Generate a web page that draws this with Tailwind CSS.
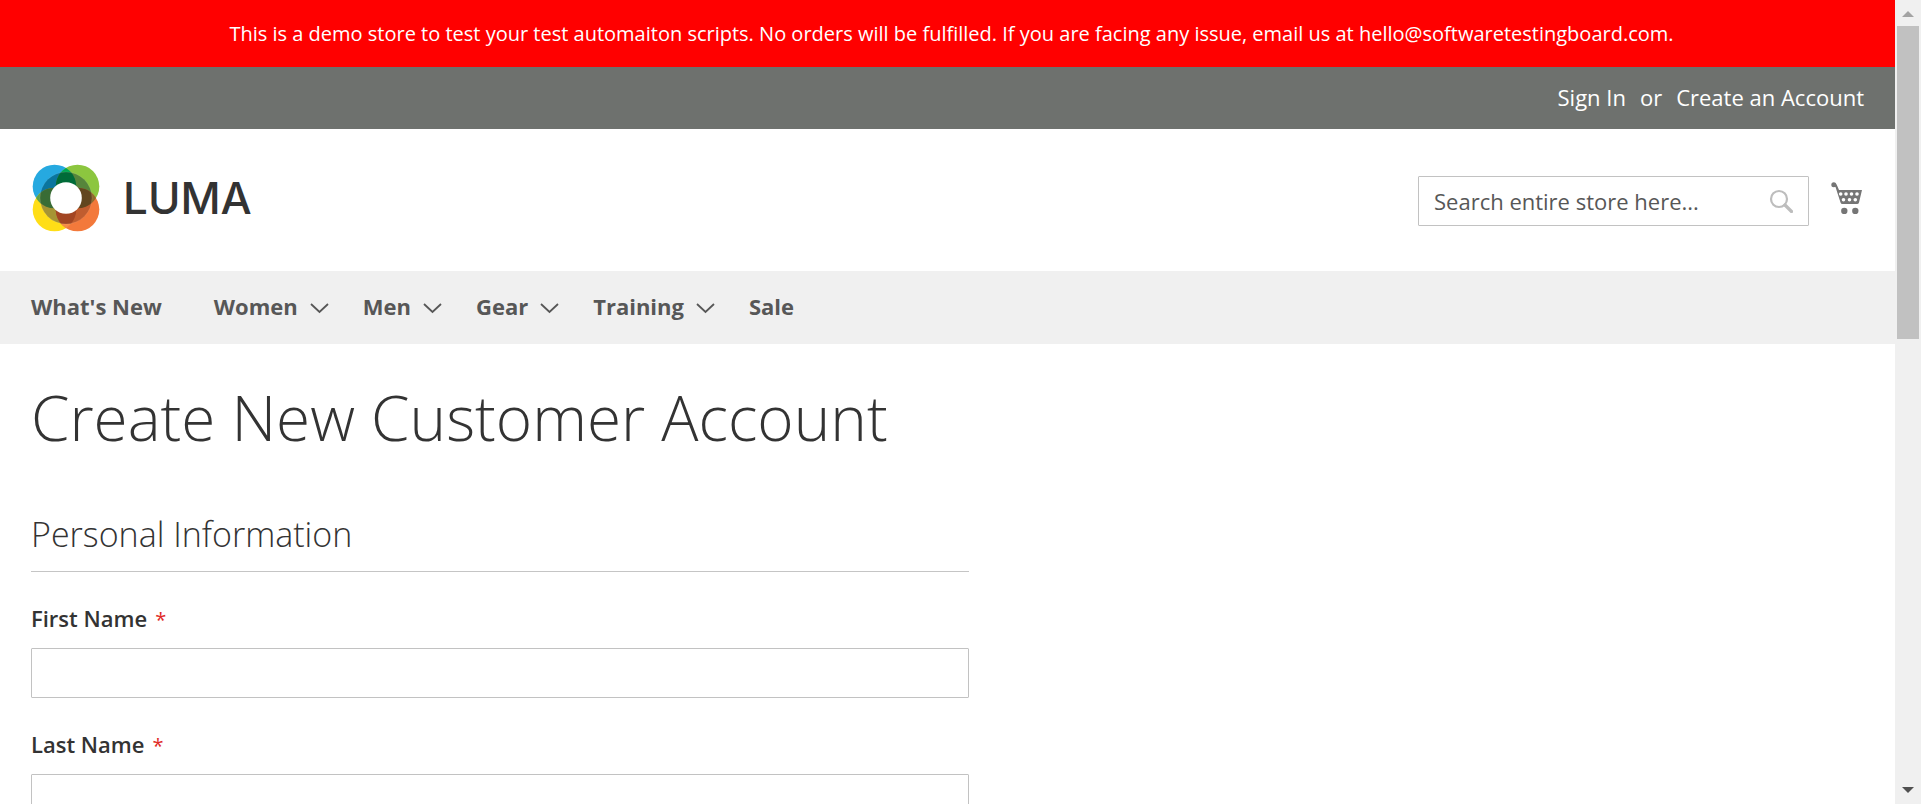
<!DOCTYPE html>
<html lang="en">
<head>
<meta charset="utf-8">
<meta name="viewport" content="width=device-width, initial-scale=1">
<title>Create New Customer Account</title>
<script src="https://cdn.jsdelivr.net/npm/@tailwindcss/browser@4"></script>
</head>
<body class="flex h-screen overflow-hidden bg-white font-['Open_Sans','Noto_Sans',sans-serif] text-[22px] leading-[30px] text-[#333]">
<div class="min-w-0 flex-1 overflow-hidden">
  <p class="bg-[#ff0000] py-[19px] pr-6 pl-8 text-center text-[20px] leading-[29px] text-white">This is a demo store to test your test automaiton scripts. No orders will be fulfilled. If you are facing any issue, email us at hello@softwaretestingboard.com.</p>
  <header>
    <div class="flex items-center justify-end bg-[#6e716e] px-[31px] pt-[15px] pb-[17px] text-white">
      <a href="#">Sign In</a>
      <span class="mx-[14px]">or</span>
      <a href="#">Create an Account</a>
    </div>
    <div class="flex h-[142px] items-center justify-between px-[31px]">
      <a href="#" aria-label="Luma home" class="flex items-center gap-[22px] pb-1">
        <svg class="size-[70px]" viewBox="0 0 70 70">
          <defs>
            <clipPath id="tl"><circle cx="23.500" cy="23.500" r="21.800"/></clipPath>
            <clipPath id="tr"><circle cx="46.500" cy="23.500" r="21.800"/></clipPath>
            <clipPath id="bl"><circle cx="23.500" cy="46.500" r="21.800"/></clipPath>
            <clipPath id="br"><circle cx="46.500" cy="46.500" r="21.800"/></clipPath>
            <clipPath id="hub"><circle cx="35" cy="35" r="26"/></clipPath>
          </defs>
          <circle cx="23.500" cy="23.500" r="21.800" fill="#26a9e0"/>
          <circle cx="46.500" cy="23.500" r="21.800" fill="#8cc63f"/>
          <circle cx="23.500" cy="46.500" r="21.800" fill="#ffde17"/>
          <circle cx="46.500" cy="46.500" r="21.800" fill="#f3793b"/>
          <g clip-path="url(#tl)"><circle cx="46.500" cy="23.500" r="21.800" fill="#00a651"/><circle cx="23.500" cy="46.500" r="21.800" fill="#5f9f45"/></g>
          <g clip-path="url(#br)"><circle cx="46.500" cy="23.500" r="21.800" fill="#8f6a2c"/><circle cx="23.500" cy="46.500" r="21.800" fill="#f58b45"/></g>
          <g clip-path="url(#hub)">
            <circle cx="23.500" cy="23.500" r="21.800" fill="#0a759e"/>
            <circle cx="46.500" cy="23.500" r="21.800" fill="#56853b"/>
            <circle cx="23.500" cy="46.500" r="21.800" fill="#a69434"/>
            <circle cx="46.500" cy="46.500" r="21.800" fill="#c15d2f"/>
            <g clip-path="url(#tl)"><circle cx="46.500" cy="23.500" r="21.800" fill="#006b38"/></g>
            <g clip-path="url(#br)"><circle cx="23.500" cy="46.500" r="21.800" fill="#a34623"/></g>
            <g clip-path="url(#tl)"><path clip-path="url(#bl)" d="M0 20h27v30H0z" fill="#396c35"/></g>
            <g clip-path="url(#tr)"><path clip-path="url(#br)" d="M43 20h27v30H43z" fill="#62461f"/></g>
          </g>
          <circle cx="35" cy="35" r="26" fill="none" stroke="#fff" stroke-opacity=".2" stroke-width=".5"/>
          <circle cx="35" cy="35" r="15.800" fill="#fff"/>
        </svg>
        <span class="font-[Inter] text-[44px] leading-[42px] font-medium">LUMA</span>
      </a>
      <div class="flex items-center gap-[22px] pr-[2px]">
        <form class="mt-[2px] flex h-[50px] w-[391px] items-center rounded-[1px] border border-[#c2c2c2] px-[15px]">
          <input type="search" aria-label="Search" placeholder="Search entire store here..." class="h-full min-w-0 flex-1 outline-none placeholder:text-[#575757]">
          <button type="submit" aria-label="Search">
            <svg class="size-6" viewBox="0 0 24 24" fill="none" stroke="#bdbdbd"><circle cx="10" cy="10" r="8" stroke-width="2.200"/><path d="M16 16l6.500 6.500" stroke-width="3.200" stroke-linecap="round"/></svg>
          </button>
        </form>
        <a href="#" aria-label="My cart" class="pb-1">
          <svg class="h-8 w-[31px]" viewBox="0 0 31 32" fill="#757575">
            <circle cx="2.800" cy="2.800" r="2.500"/><path d="M3 1.500C5 1.300 5.700 2.500 6.300 4l1.700 4H31l-3 12.500q-.4 1.500-2 1.500H11.500q-1.500 0-2-1.500L4.500 5 2 4Z"/>
            <circle cx="13.300" cy="29" r="3.200"/><circle cx="24.300" cy="29" r="3.200"/>
            <g fill="#fff"><circle cx="9.700" cy="12" r="1.800"/><circle cx="15" cy="12" r="1.800"/><circle cx="20.500" cy="12" r="1.800"/><circle cx="26" cy="12" r="1.800"/><circle cx="12.500" cy="17.700" r="1.800"/><circle cx="18.500" cy="17.700" r="1.800"/><circle cx="24.300" cy="17.700" r="1.800"/></g>
          </svg>
        </a>
      </div>
    </div>
  </header>
  <nav class="flex h-[73px] items-center gap-[34px] bg-[#f0f0f0] px-[31px] pb-[3px] font-bold text-[#575757]">
    <a href="#" class="mr-[18px]">What's New</a>
    <a href="#" class="flex items-center gap-3">Women<svg class="mt-1 h-[11px] w-[19px]" viewBox="0 0 19 11" fill="none" stroke="#575757" stroke-width="1.800"><path d="M1 1l8.500 8L18 1"/></svg></a>
    <a href="#" class="flex items-center gap-3">Men<svg class="mt-1 h-[11px] w-[19px]" viewBox="0 0 19 11" fill="none" stroke="#575757" stroke-width="1.800"><path d="M1 1l8.500 8L18 1"/></svg></a>
    <a href="#" class="flex items-center gap-3">Gear<svg class="mt-1 h-[11px] w-[19px]" viewBox="0 0 19 11" fill="none" stroke="#575757" stroke-width="1.800"><path d="M1 1l8.500 8L18 1"/></svg></a>
    <a href="#" class="flex items-center gap-3">Training<svg class="mt-1 h-[11px] w-[19px]" viewBox="0 0 19 11" fill="none" stroke="#575757" stroke-width="1.800"><path d="M1 1l8.500 8L18 1"/></svg></a>
    <a href="#">Sale</a>
  </nav>
  <main class="px-[31px]">
    <h1 class="pt-[38px] text-[62px] leading-[70px] font-light">Create New Customer Account</h1>
    <form class="max-w-[938px] pt-[61px]">
      <h2 class="border-b border-[#c5c5c5] pb-4 text-[34px] leading-[42px] font-light">Personal Information</h2>
      <div class="flex flex-col gap-[31px] pt-[31px]">
        <div class="flex flex-col gap-[15px]">
          <label for="first" class="font-semibold">First Name<span class="ml-2 text-[20px] leading-none font-normal text-[#e02b27]">*</span></label>
          <input id="first" type="text" class="h-[50px] w-full rounded-[1px] border border-[#c2c2c2] px-[14px]">
        </div>
        <div class="flex flex-col gap-[15px]">
          <label for="last" class="font-semibold">Last Name<span class="ml-2 text-[20px] leading-none font-normal text-[#e02b27]">*</span></label>
          <input id="last" type="text" class="h-[50px] w-full rounded-[1px] border border-[#c2c2c2] px-[14px]">
        </div>
      </div>
    </form>
  </main>
</div>
<aside aria-hidden="true" class="flex w-[26px] shrink-0 flex-col items-center bg-[#f0f0f0]">
  <svg class="h-[26px] w-3 shrink-0" viewBox="0 0 12 26" fill="#a3a3a3"><path d="M0 17l6-6 6 6z"/></svg>
  <div class="h-[313px] w-[22px] bg-[#c1c1c1]"></div>
  <svg class="mt-auto h-[26px] w-3 shrink-0" viewBox="0 0 12 26" fill="#505050"><path d="M0 9h12l-6 6z"/></svg>
</aside>
</body>
</html>
